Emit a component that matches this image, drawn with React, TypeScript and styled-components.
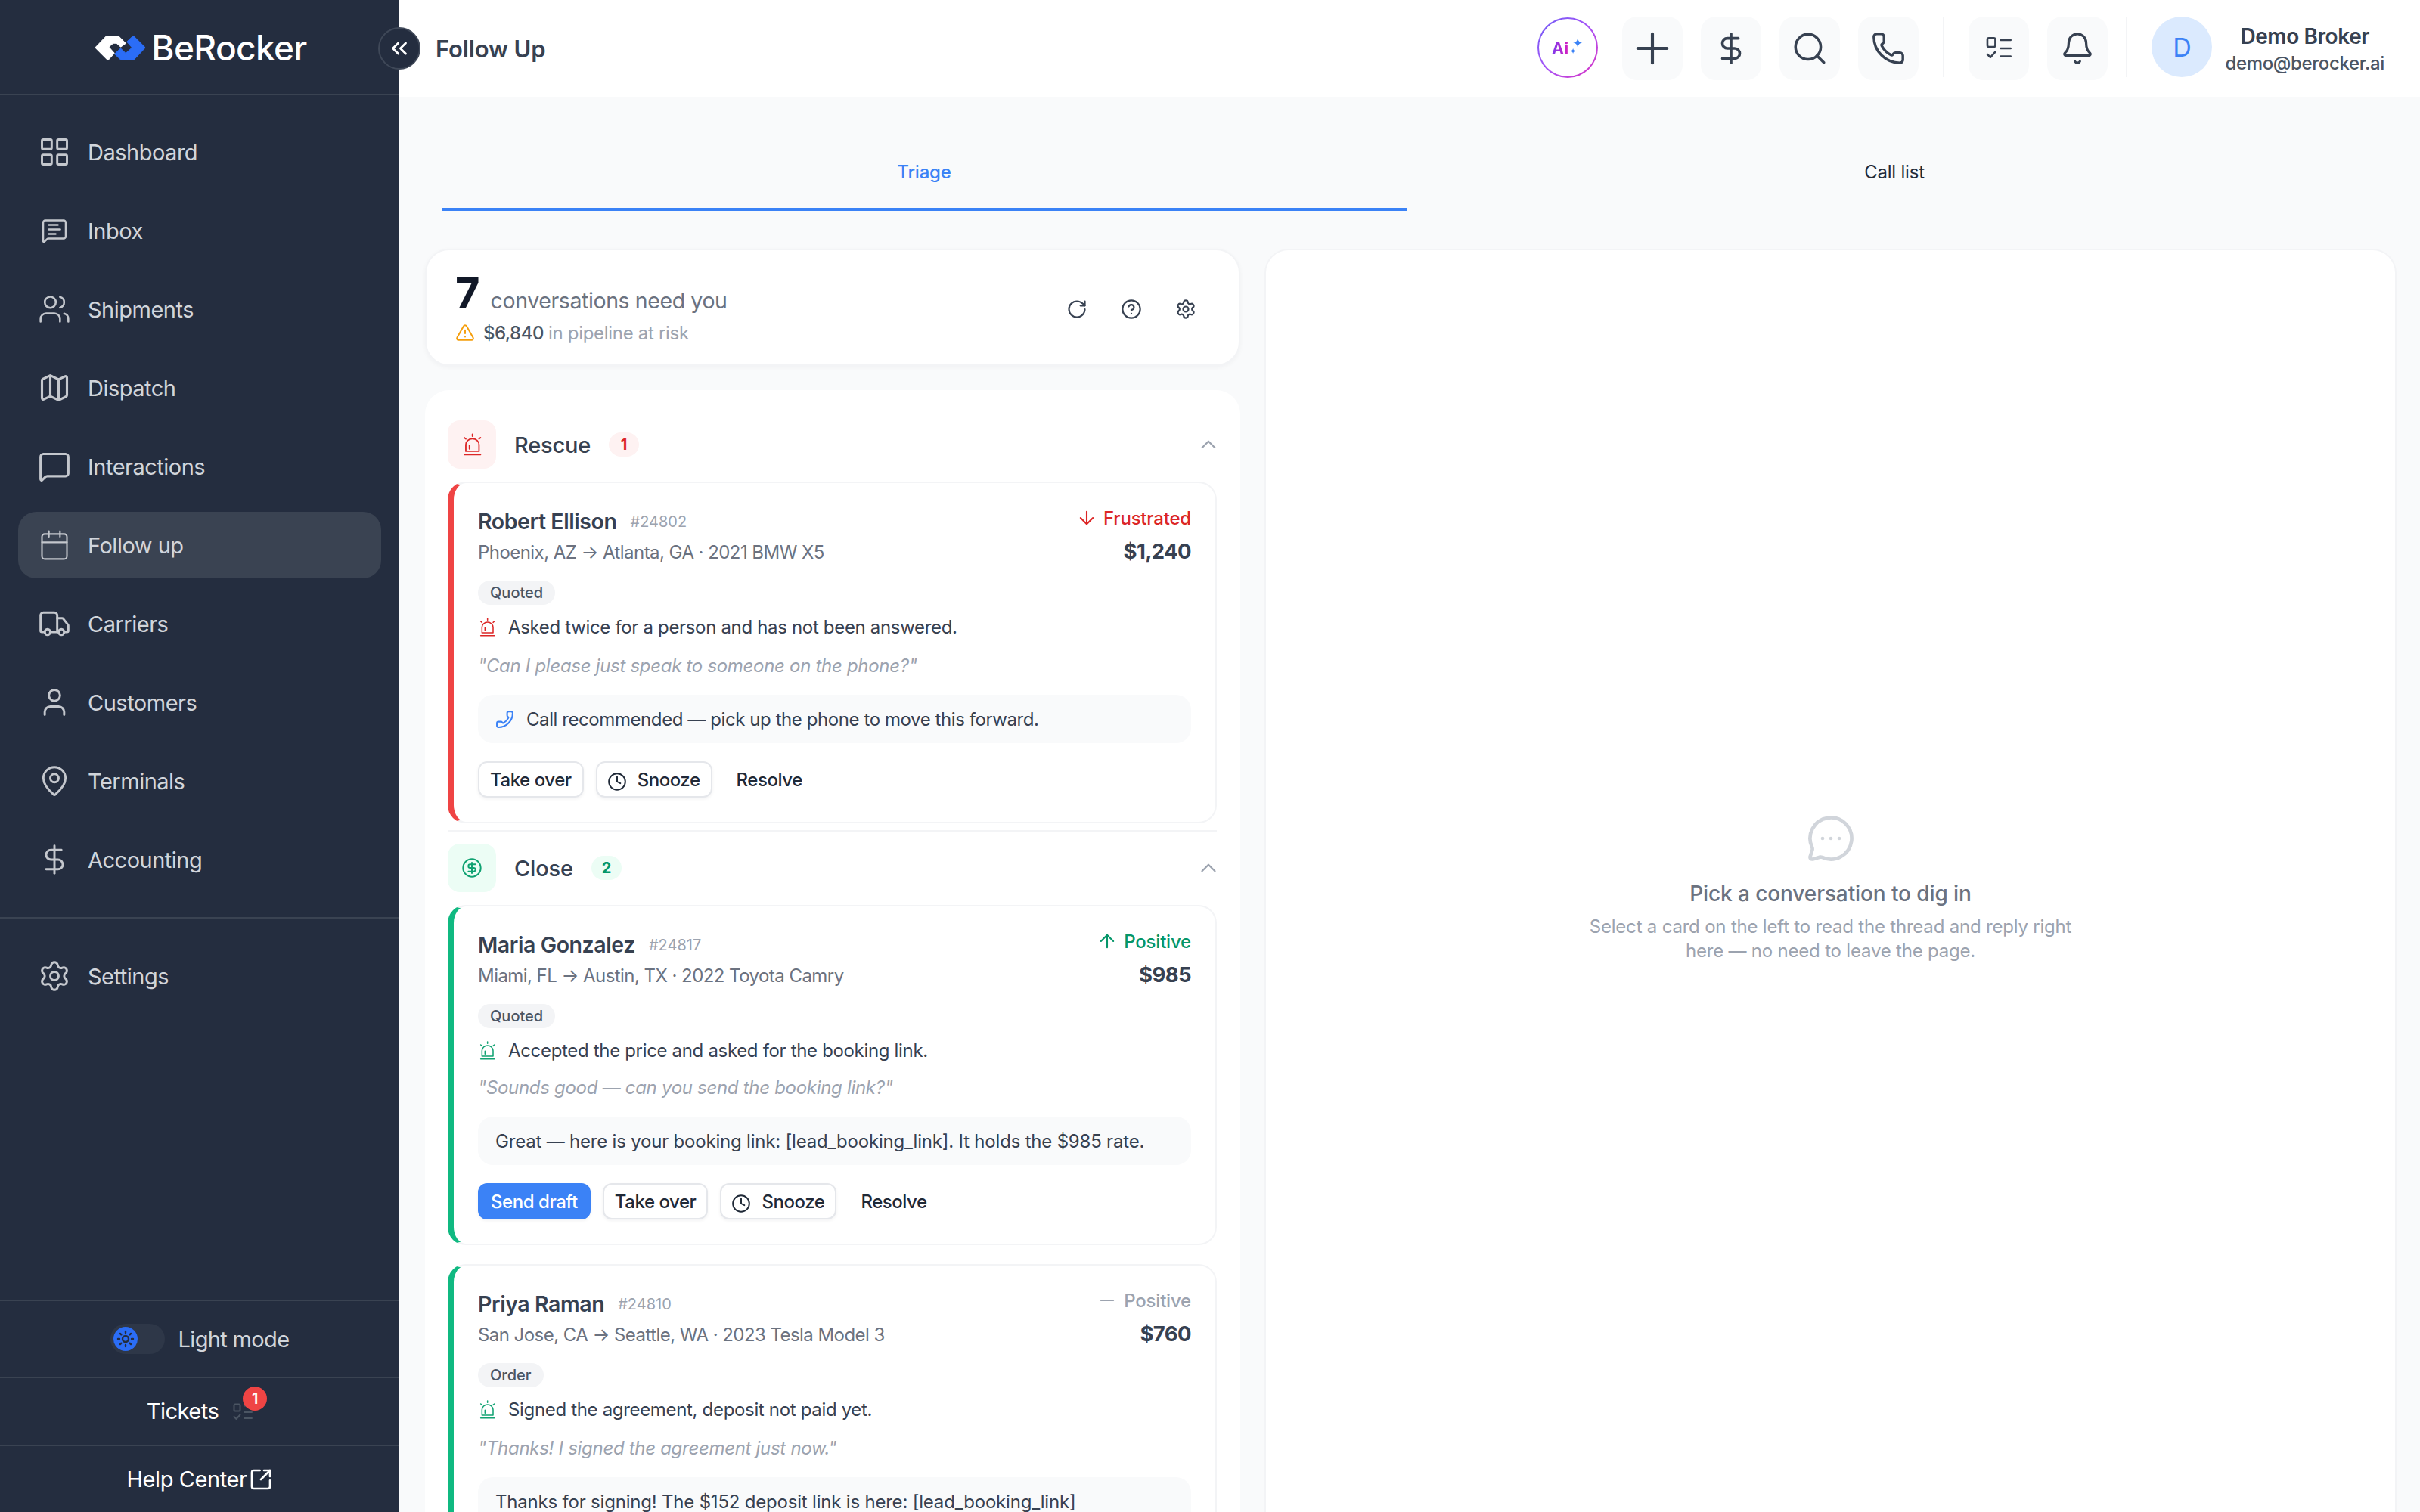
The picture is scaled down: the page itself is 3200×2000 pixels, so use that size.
import React from "react";
import styled, { createGlobalStyle } from "styled-components";
import {
  Search, Phone, DollarSign, Bell, Plus, ChevronsLeft, ChevronUp, RotateCw, CircleHelp, Settings,
  ArrowDown, ArrowUp, Minus, Clock, SquareArrowOutUpRight, MessageCircleMore, TriangleAlert,
  CircleDollarSign, LayoutGrid, Users, Map as MapIcon, MessageSquare, Calendar, Truck, User, MapPin,
  MessageSquareText, Sun,
} from "lucide-react";

const GlobalStyle = createGlobalStyle`
  html, body { margin: 0; padding: 0; height: 100%; overflow: hidden; background: #f9fafb; }
  * { box-sizing: border-box; }
  body { font-family: Inter, "Noto Sans", sans-serif; }
`;

const Shell = styled.div`
  display: flex;
  width: 3200px;
  height: 2000px;
  overflow: hidden;
  background: #f9fafb;
`;

/* ---------- Sidebar ---------- */
const Sidebar = styled.aside`
  position: relative;
  flex: 0 0 528px;
  display: flex;
  flex-direction: column;
  background: #242d3f;
  color: #d1d5db;
`;
const Brand = styled.div`
  height: 126px;
  border-bottom: 2px solid #3a4352;
  display: flex;
  align-items: center;
  justify-content: center;
  gap: 8px;
  padding-left: 4px;
  padding-top: 2px;
`;
const BrandName = styled.span`
  font-size: 46px;
  font-weight: 500;
  color: #fff;
  letter-spacing: -0.6px;
`;
const Collapse = styled.button`
  position: absolute;
  top: 36px;
  right: -28px;
  width: 56px;
  height: 56px;
  border-radius: 50%;
  border: 2px solid #3f4858;
  background: #242d3f;
  color: #fff;
  display: flex;
  align-items: center;
  justify-content: center;
  padding: 0;
  z-index: 3;
`;
const Nav = styled.nav`
  display: flex;
  flex-direction: column;
  gap: 16px;
  padding: 31px 24px 0;
`;
const SettingsNav = styled(Nav)`
  padding-top: 0;
  margin-top: -2px;
`;
const NavItem = styled.div<{ $active?: boolean }>`
  height: 88px;
  display: flex;
  align-items: center;
  gap: 22px;
  padding-left: 26px;
  border-radius: 24px;
  font-size: 29px;
  font-weight: 400;
  letter-spacing: -0.5px;
  color: #d1d5db;
  background: ${(p) => (p.$active ? "#3a4352" : "transparent")};
`;
const NavIcon = styled.span`
  width: 44px;
  height: 44px;
  display: flex;
  align-items: center;
  justify-content: center;
  color: #c4c7cd;
`;
const NavRule = styled.div`
  height: 2px;
  background: #3a4352;
  margin-top: 32px;
  margin-bottom: 34px;
`;
const Spacer = styled.div`
  flex: 1;
`;
const FootRow = styled.div<{ $h: number }>`
  height: ${(p) => p.$h}px;
  border-top: 2px solid #3a4352;
  display: flex;
  align-items: center;
  justify-content: center;
`;
const ModeToggle = styled.span`
  width: 72px;
  height: 40px;
  border-radius: 20px;
  background: #2e3748;
  padding: 4px;
  display: flex;
  margin-right: 18px;
`;
const ModeKnob = styled.span`
  width: 32px;
  height: 32px;
  border-radius: 50%;
  background: #2b6df6;
  color: #242d3f;
  display: flex;
  align-items: center;
  justify-content: center;
`;
const ModeLabel = styled.span`
  font-size: 29px;
  font-weight: 400;
  letter-spacing: -0.65px;
  color: #d1d5db;
`;
const TicketLabel = styled.span`
  font-size: 29px;
  font-weight: 400;
  letter-spacing: -0.5px;
  color: #fff;
  margin-top: -2px;
`;
const TicketIcon = styled.span`
  position: relative;
  margin-left: 19px;
  width: 26px;
  height: 24px;
  display: flex;
  color: #4b5563;
`;
const TicketBadge = styled.span`
  position: absolute;
  top: -21px;
  left: 13px;
  width: 32px;
  height: 32px;
  border-radius: 50%;
  background: #ef4444;
  color: #fff;
  font-size: 20px;
  font-weight: 600;
  display: flex;
  align-items: center;
  justify-content: center;
`;
const HelpLabel = styled.span`
  font-size: 29px;
  font-weight: 400;
  letter-spacing: -0.4px;
  color: #fff;
  display: flex;
  align-items: center;
  gap: 2px;
`;

/* ---------- Main ---------- */
const Main = styled.main`
  flex: 1;
  min-width: 0;
  display: flex;
  flex-direction: column;
`;
const Header = styled.header`
  height: 128px;
  flex: 0 0 128px;
  background: #fff;
  display: flex;
  align-items: center;
  padding: 0 47px 0 48px;
`;
const PageTitle = styled.h1`
  margin: 0;
  font-size: 31px;
  font-weight: 600;
  letter-spacing: -0.15px;
  color: #374151;
  flex: 1;
`;
const AiButton = styled.div`
  width: 80px;
  height: 80px;
  border-radius: 50%;
  padding: 2px;
  background: linear-gradient(135deg, #6d5cf6 0%, #a855f7 50%, #db2fc0 100%);
  margin-right: 32px;
  margin-top: -2px;
`;
const AiInner = styled.div`
  width: 100%;
  height: 100%;
  border-radius: 50%;
  background: #fff;
  display: flex;
  align-items: center;
  justify-content: center;
  gap: 1px;
  padding-top: 2px;
`;
const AiText = styled.span`
  font-size: 22px;
  font-weight: 700;
  background: linear-gradient(90deg, #7c3aed, #d61fc0);
  -webkit-background-clip: text;
  background-clip: text;
  color: transparent;
`;
const ToolGroup = styled.div`
  display: flex;
  gap: 24px;
`;
const ToolButton = styled.div`
  width: 80px;
  height: 84px;
  border-radius: 20px;
  background: #f9fafb;
  color: #374151;
  display: flex;
  align-items: center;
  justify-content: center;
`;
const HeadRule = styled.div<{ $left: number }>`
  width: 2px;
  height: 80px;
  background: #f3f4f6;
  margin: -4px 32px 0 ${(p) => p.$left}px;
`;
const Avatar = styled.div`
  width: 80px;
  height: 80px;
  border-radius: 50%;
  background: #dbeafe;
  color: #3b82f6;
  font-size: 34px;
  font-weight: 400;
  display: flex;
  align-items: center;
  justify-content: center;
  margin-top: -4px;
`;
const UserBlock = styled.div`
  margin-left: 17px;
  display: flex;
  flex-direction: column;
  align-items: center;
  gap: 4px;
`;
const UserName = styled.span`
  font-size: 28px;
  font-weight: 600;
  letter-spacing: -0.4px;
  color: #374151;
`;
const UserMail = styled.span`
  font-size: 24px;
  font-weight: 500;
  letter-spacing: -0.35px;
  color: #4b5563;
`;

const Tabs = styled.div`
  display: flex;
  margin: 82px 50px 0 56px;
`;
const Tab = styled.div<{ $active?: boolean }>`
  flex: ${(p) => (p.$active ? "0 0 1276px" : "1")};
  text-align: center;
  font-size: 24px;
  line-height: 36px;
  font-weight: ${(p) => (p.$active ? 500 : 400)};
  letter-spacing: -0.2px;
  padding-bottom: 29px;
  color: ${(p) => (p.$active ? "#3b82f6" : "#1f2937")};
  border-bottom: 4px solid ${(p) => (p.$active ? "#3b82f6" : "transparent")};
`;
const Columns = styled.div`
  flex: 1;
  min-height: 0;
  display: flex;
  gap: 32px;
  padding: 50px 31px 0 34px;
`;
const LeftCol = styled.div`
  flex: 0 0 1078px;
  display: flex;
  flex-direction: column;
  gap: 32px;
`;
const Hero = styled.div`
  height: 155px;
  flex: 0 0 155px;
  background: #fff;
  border: 2px solid #f3f4f6;
  border-radius: 32px;
  box-shadow: 0 2px 6px rgba(17, 24, 39, 0.04);
  display: flex;
  align-items: center;
  justify-content: space-between;
  padding: 0 56px 0 38px;
`;
const HeroText = styled.div`
  display: flex;
  flex-direction: column;
  margin-top: 2px;
`;
const HeroTop = styled.div`
  display: flex;
  align-items: baseline;
  gap: 14px;
  height: 58px;
  margin-top: -2px;
`;
const HeroCount = styled.span`
  font-size: 56px;
  line-height: 58px;
  font-weight: 700;
  color: #111827;
`;
const HeroLabel = styled.span`
  font-size: 28.5px;
  letter-spacing: -0.4px;
  font-weight: 400;
  color: #6b7280;
`;
const HeroSub = styled.div`
  display: flex;
  align-items: center;
  gap: 11px;
  margin-top: 9px;
  font-size: 24px;
  letter-spacing: -0.3px;
  color: #9ca3af;
`;
const HeroMoney = styled.span`
  font-weight: 500;
  color: #4b5563;
  margin-right: -5px;
  letter-spacing: -0.5px;
`;
const HeroActions = styled.div`
  display: flex;
  gap: 44px;
  color: #374151;
  margin-top: 4px;
`;
const Panel = styled.div`
  flex: 1;
  min-height: 0;
  overflow: hidden;
  background: #fff;
  border-radius: 32px 32px 0 0;
  padding: 40px 31px 0 30px;
  display: flex;
  flex-direction: column;
`;
const SectionHead = styled.div`
  height: 64px;
  flex: 0 0 64px;
  display: flex;
  align-items: center;
`;
const SectionIcon = styled.span<{ $tone: string }>`
  width: 64px;
  height: 64px;
  border-radius: 16px;
  background: ${(p) => (p.$tone === "red" ? "#fef2f2" : "#ecfdf5")};
  color: ${(p) => (p.$tone === "red" ? "#dc2626" : "#10a272")};
  display: flex;
  align-items: center;
  justify-content: center;
  margin-right: 24px;
`;
const SectionName = styled.span`
  font-size: 29px;
  font-weight: 500;
  letter-spacing: -0.2px;
  color: #374151;
  margin-right: 24px;
`;
const SectionCount = styled.span<{ $tone: string }>`
  min-width: 40px;
  height: 32px;
  padding: 0 14px;
  border-radius: 16px;
  background: ${(p) => (p.$tone === "red" ? "#fef2f2" : "#ecfdf5")};
  color: ${(p) => (p.$tone === "red" ? "#dc2626" : "#059669")};
  font-size: 20px;
  font-weight: 700;
  display: flex;
  align-items: center;
  justify-content: center;
`;
const Chevron = styled.span`
  margin-left: auto;
  color: #9ca3af;
  display: flex;
  margin-right: -6px;
`;
const Card = styled.article<{ $tone: string; $h: number; $gap: number }>`
  flex: 0 0 ${(p) => p.$h}px;
  height: ${(p) => p.$h}px;
  margin-top: ${(p) => p.$gap}px;
  background: #fff;
  border: 2px solid #f3f4f6;
  border-left: 8px solid ${(p) => (p.$tone === "red" ? "#ef4444" : "#10b981")};
  border-radius: 24px;
  padding: 30px 32px 0 32px;
  display: flex;
  flex-direction: column;
`;
const CardTop = styled.div`
  display: flex;
  justify-content: space-between;
  align-items: flex-start;
`;
const CardInfo = styled.div`
  display: flex;
  flex-direction: column;
`;
const NameLine = styled.div`
  display: flex;
  align-items: center;
  gap: 18px;
  height: 44px;
  margin-top: -2px;
  margin-bottom: 2px;
`;
const CustomerName = styled.span`
  font-size: 28.5px;
  font-weight: 600;
  letter-spacing: -0.42px;
  color: #374151;
`;
const RefNo = styled.span`
  font-size: 20px;
  color: #9ca3af;
  letter-spacing: 0;
  padding-top: 2px;
`;
const Route = styled.div`
  font-size: 24px;
  line-height: 36px;
  letter-spacing: -0.55px;
  color: #6b7280;
`;
const CardRight = styled.div`
  display: flex;
  flex-direction: column;
  align-items: flex-end;
`;
const Mood = styled.div<{ $tone: string }>`
  display: flex;
  align-items: center;
  gap: 8px;
  height: 36px;
  margin-top: -2px;
  font-size: 24px;
  font-weight: 500;
  letter-spacing: -0.2px;
  color: ${(p) => (p.$tone === "red" ? "#dc2626" : p.$tone === "green" ? "#059669" : "#9ca3af")};
`;
const Price = styled.div`
  font-size: 27.5px;
  font-weight: 700;
  letter-spacing: -0.6px;
  line-height: 44px;
  margin-top: 4px;
  color: #374151;
`;
const Stage = styled.span`
  align-self: flex-start;
  height: 32px;
  margin-top: 17px;
  padding: 0 16px;
  border-radius: 16px;
  background: #f3f4f6;
  color: #4b5563;
  font-size: 20px;
  font-weight: 500;
  display: flex;
  align-items: center;
`;
const Reason = styled.div<{ $tone: string }>`
  display: flex;
  align-items: center;
  gap: 17px;
  height: 36px;
  margin-top: 11px;
  font-size: 24px;
  letter-spacing: -0.33px;
  color: #374151;
  svg {
    color: ${(p) => (p.$tone === "red" ? "#dc2626" : "#10a272")};
    margin-left: 2px;
  }
`;
const Quote = styled.div<{ $gap: number }>`
  font-size: 24px;
  line-height: 36px;
  margin-top: ${(p) => p.$gap}px;
  letter-spacing: -0.3px;
  font-style: italic;
  color: #9ca3af;
`;
const Draft = styled.div<{ $call?: boolean }>`
  flex: 0 0 64px;
  height: 64px;
  margin-top: 20px;
  border-radius: 20px;
  background: #f9fafb;
  padding: 0 23px;
  display: flex;
  align-items: center;
  gap: 16px;
  font-size: 24px;
  letter-spacing: ${(p) => (p.$call ? "-0.42px" : "-0.2px")};
  color: #374151;
  svg {
    color: #3b82f6;
    transform: scaleX(-1);
  }
`;
const Actions = styled.div`
  display: flex;
  gap: 16px;
  margin-top: 24px;
`;
const Btn = styled.button<{ $kind?: string }>`
  height: 48px;
  padding: 0 ${(p) => (p.$kind === "primary" ? 17 : 14)}px;
  border-radius: 12px;
  font: 500 24px Inter, sans-serif;
  letter-spacing: -0.45px;
  display: flex;
  align-items: center;
  gap: 14px;
  color: ${(p) => (p.$kind === "primary" ? "#fff" : "#1f2937")};
  background: ${(p) => (p.$kind === "primary" ? "#3b82f6" : p.$kind === "ghost" ? "transparent" : "#fff")};
  border: ${(p) => (p.$kind === "primary" || p.$kind === "ghost" ? "0" : "2px solid #e5e7eb")};
  box-shadow: ${(p) => (p.$kind === "ghost" ? "none" : "0 2px 4px rgba(17,24,39,0.05)")};
  padding-left: ${(p) => (p.$kind === "ghost" ? "16px" : undefined)};
  svg {
    margin-top: 6px;
    margin-left: -1px;
  }
`;
const SectionRule = styled.div`
  flex: 0 0 2px;
  background: #f3f4f6;
  margin: 9px 0 16px;
`;

const RightPanel = styled.section`
  flex: 1;
  background: #fff;
  border: 2px solid #f3f4f6;
  border-bottom: 0;
  border-radius: 32px 32px 0 0;
  display: flex;
  flex-direction: column;
  align-items: center;
  justify-content: center;
  padding-top: 18px;
`;
const EmptyIcon = styled.span`
  color: #d1d5db;
  display: flex;
`;
const EmptyTitle = styled.h2`
  margin: 20px 0 0;
  font-size: 28px;
  line-height: 40px;
  font-weight: 500;
  letter-spacing: -0.1px;
  color: #6b7280;
`;
const EmptyText = styled.p`
  margin: 8px 0 0;
  width: 680px;
  text-align: center;
  font-size: 24px;
  line-height: 32px;
  letter-spacing: -0.2px;
  color: #9ca3af;
`;

/* ---------- Drawn icons ---------- */
const Logo = () => (
  <svg width="66" height="33" viewBox="25 28 197 97">
    <path d="M25 75 70 28h45l30 30-20 14-15-14H95L78 72l22 25-25 28z" fill="#fff" stroke="#fff" strokeWidth="3" strokeLinejoin="round" />
    <path d="M222 75l-47 50h-47l-26-25 23-22 20 20 25-23-20-23 25-24z" fill="#2b6df6" stroke="#2b6df6" strokeWidth="3" strokeLinejoin="round" />
  </svg>
);
const SirenIcon = ({ w, h }: { w: number; h: number }) => (
  <svg width={w} height={h} viewBox="25 22 63 75" fill="none" stroke="currentColor" strokeWidth="4.6" strokeLinecap="round" strokeLinejoin="round" style={{ flex: "none" }}>
    <path d="M35 82V60a22 20 0 0 1 44 0v22z" />
    <path d="M30 93h54" />
    <path d="M57 25v7M30 37l5 4M84 37l-5 4M47 74V62" />
  </svg>
);
const ChecklistIcon = ({ size, stroke }: { size: number; stroke: number }) => (
  <svg width={size} height={size} viewBox="0 0 26 24" fill="none" stroke="currentColor" strokeWidth={stroke} strokeLinecap="round" strokeLinejoin="round">
    <rect x="1.5" y="1.5" width="8" height="9" rx="1.5" />
    <path d="M15 3.500h10M15 12h10M15 20h10M1.500 18l3 3 5-5.500" />
  </svg>
);
const AiSparks = () => (
  <svg width="20" height="27" viewBox="0 0 16 22" fill="#3b82f6" style={{ marginTop: -4 }}>
    <path d="M9 1c.6 3.400 1.800 4.600 5 5.200-3.200.6-4.400 1.800-5 5.200-.6-3.400-1.800-4.600-5-5.200 3.200-.6 4.400-1.800 5-5.200z" />
    <path d="M4 12c.3 1.800 1 2.500 3 3-2 .5-2.700 1.200-3 3-.3-1.800-1-2.500-3-3 2-.5 2.700-1.200 3-3z" />
  </svg>
);

const navItems = [
  { label: "Dashboard", Icon: LayoutGrid, size: 44, stroke: 1.6 },
  { label: "Inbox", Icon: MessageSquareText, size: 36, stroke: 1.7 },
  { label: "Shipments", Icon: Users, size: 44, stroke: 1.4 },
  { label: "Dispatch", Icon: MapIcon, size: 46, stroke: 1.7 },
  { label: "Interactions", Icon: MessageSquare, size: 46, stroke: 1.7 },
  { label: "Follow up", Icon: Calendar, size: 44, stroke: 1.15, active: true },
  { label: "Carriers", Icon: Truck, size: 44, stroke: 1.6 },
  { label: "Customers", Icon: User, size: 44, stroke: 1.6 },
  { label: "Terminals", Icon: MapPin, size: 46, stroke: 1.6 },
  { label: "Accounting", Icon: DollarSign, size: 44, stroke: 1.6 },
];

type CardData = {
  name: string; ref: string; route: string; mood: string; moodTone: string; price: string; stage: string;
  reason: string; quote: string; draft: string; call?: boolean; send?: boolean; tone: string; h: number; gap: number; quoteGap: number;
};
const rescue: CardData = {
  name: "Robert Ellison", ref: "#24802", route: "Phoenix, AZ → Atlanta, GA · 2021 BMW X5", mood: "Frustrated", moodTone: "red",
  price: "$1,240", stage: "Quoted", reason: "Asked twice for a person and has not been answered.",
  quote: "\"Can I please just speak to someone on the phone?\"", draft: "Call recommended — pick up the phone to move this forward.",
  call: true, tone: "red", h: 452, gap: 17, quoteGap: 16,
};
const close: CardData[] = [
  {
    name: "Maria Gonzalez", ref: "#24817", route: "Miami, FL → Austin, TX · 2022 Toyota Camry", mood: "Positive", moodTone: "green",
    price: "$985", stage: "Quoted", reason: "Accepted the price and asked for the booking link.",
    quote: "\"Sounds good — can you send the booking link?\"", draft: "Great — here is your booking link: [lead_booking_link]. It holds the $985 rate.",
    send: true, tone: "green", h: 450, gap: 17, quoteGap: 14,
  },
  {
    name: "Priya Raman", ref: "#24810", route: "San Jose, CA → Seattle, WA · 2023 Tesla Model 3", mood: "Positive", moodTone: "gray",
    price: "$760", stage: "Order", reason: "Signed the agreement, deposit not paid yet.",
    quote: "\"Thanks! I signed the agreement just now.\"", draft: "Thanks for signing! The $152 deposit link is here: [lead_booking_link]",
    send: true, tone: "green", h: 450, gap: 25, quoteGap: 16,
  },
];

const ConversationCard = ({ c }: { c: CardData }) => (
  <Card $tone={c.tone} $h={c.h} $gap={c.gap}>
    <CardTop>
      <CardInfo>
        <NameLine>
          <CustomerName>{c.name}</CustomerName>
          <RefNo>{c.ref}</RefNo>
        </NameLine>
        <Route>{c.route}</Route>
      </CardInfo>
      <CardRight>
        <Mood $tone={c.moodTone}>
          {c.moodTone === "red" && <ArrowDown size={28} strokeWidth={1.8} />}
          {c.moodTone === "green" && <ArrowUp size={28} strokeWidth={1.8} />}
          {c.moodTone === "gray" && <Minus size={28} strokeWidth={1.8} />}
          {c.mood}
        </Mood>
        <Price>{c.price}</Price>
      </CardRight>
    </CardTop>
    <Stage>{c.stage}</Stage>
    <Reason $tone={c.tone}>
      <SirenIcon w={21} h={25} />
      {c.reason}
    </Reason>
    <Quote $gap={c.quoteGap}>{c.quote}</Quote>
    <Draft $call={c.call}>
      {c.call && <Phone size={25} strokeWidth={2} />}
      {c.draft}
    </Draft>
    <Actions>
      {c.send && <Btn $kind="primary">Send draft</Btn>}
      <Btn>Take over</Btn>
      <Btn>
        <Clock size={26} strokeWidth={1.8} />
        Snooze
      </Btn>
      <Btn $kind="ghost">Resolve</Btn>
    </Actions>
  </Card>
);

export default function App() {
  return (
    <Shell>
      <GlobalStyle />
      <Sidebar>
        <Brand>
          <Logo />
          <BrandName>BeRocker</BrandName>
        </Brand>
        <Collapse>
          <ChevronsLeft size={34} strokeWidth={2} />
        </Collapse>
        <Nav>
          {navItems.map(({ label, Icon, size, stroke, active }) => (
            <NavItem key={label} $active={active}>
              <NavIcon>
                <Icon size={size} strokeWidth={stroke} />
              </NavIcon>
              {label}
            </NavItem>
          ))}
        </Nav>
        <NavRule />
        <SettingsNav>
          <NavItem>
            <NavIcon>
              <Settings size={44} strokeWidth={1.6} />
            </NavIcon>
            Settings
          </NavItem>
        </SettingsNav>
        <Spacer />
        <FootRow $h={102}>
          <ModeToggle>
            <ModeKnob>
              <Sun size={24} strokeWidth={2.4} />
            </ModeKnob>
          </ModeToggle>
          <ModeLabel>Light mode</ModeLabel>
        </FootRow>
        <FootRow $h={90}>
          <TicketLabel>Tickets</TicketLabel>
          <TicketIcon>
            <ChecklistIcon size={26} stroke={2} />
            <TicketBadge>1</TicketBadge>
          </TicketIcon>
        </FootRow>
        <FootRow $h={89}>
          <HelpLabel>
            Help Center
            <SquareArrowOutUpRight size={32} strokeWidth={2} />
          </HelpLabel>
        </FootRow>
      </Sidebar>
      <Main>
        <Header>
          <PageTitle>Follow Up</PageTitle>
          <AiButton>
            <AiInner>
              <AiText>Ai</AiText>
              <AiSparks />
            </AiInner>
          </AiButton>
          <ToolGroup>
            <ToolButton><Plus size={66} strokeWidth={1.5} /></ToolButton>
            <ToolButton><DollarSign size={46} strokeWidth={1.9} /></ToolButton>
            <ToolButton><Search size={50} strokeWidth={1.7} /></ToolButton>
            <ToolButton><Phone size={46} strokeWidth={1.8} /></ToolButton>
          </ToolGroup>
          <HeadRule $left={32} />
          <ToolGroup>
            <ToolButton><ChecklistIcon size={34} stroke={2} /></ToolButton>
            <ToolButton><Bell size={46} strokeWidth={1.7} /></ToolButton>
          </ToolGroup>
          <HeadRule $left={24} />
          <Avatar>D</Avatar>
          <UserBlock>
            <UserName>Demo Broker</UserName>
            <UserMail>demo@berocker.ai</UserMail>
          </UserBlock>
        </Header>
        <Tabs>
          <Tab $active>Triage</Tab>
          <Tab>Call list</Tab>
        </Tabs>
        <Columns>
          <LeftCol>
            <Hero>
              <HeroText>
                <HeroTop>
                  <HeroCount>7</HeroCount>
                  <HeroLabel>conversations need you</HeroLabel>
                </HeroTop>
                <HeroSub>
                  <TriangleAlert size={26} color="#f59e0b" strokeWidth={1.8} />
                  <HeroMoney>$6,840</HeroMoney>
                  in pipeline at risk
                </HeroSub>
              </HeroText>
              <HeroActions>
                <RotateCw size={28} strokeWidth={1.9} />
                <CircleHelp size={28} strokeWidth={1.9} />
                <Settings size={28} strokeWidth={1.9} />
              </HeroActions>
            </Hero>
            <Panel>
              <SectionHead>
                <SectionIcon $tone="red"><SirenIcon w={25} h={30} /></SectionIcon>
                <SectionName>Rescue</SectionName>
                <SectionCount $tone="red">1</SectionCount>
                <Chevron><ChevronUp size={34} strokeWidth={1.6} /></Chevron>
              </SectionHead>
              <ConversationCard c={rescue} />
              <SectionRule />
              <SectionHead>
                <SectionIcon $tone="green"><CircleDollarSign size={28} strokeWidth={1.7} /></SectionIcon>
                <SectionName>Close</SectionName>
                <SectionCount $tone="green">2</SectionCount>
                <Chevron><ChevronUp size={34} strokeWidth={1.6} /></Chevron>
              </SectionHead>
              <ConversationCard c={close[0]} />
              <ConversationCard c={close[1]} />
            </Panel>
          </LeftCol>
          <RightPanel>
            <EmptyIcon><MessageCircleMore size={66} strokeWidth={1.7} /></EmptyIcon>
            <EmptyTitle>Pick a conversation to dig in</EmptyTitle>
            <EmptyText>Select a card on the left to read the thread and reply right here — no need to leave the page.</EmptyText>
          </RightPanel>
        </Columns>
      </Main>
    </Shell>
  );
}
